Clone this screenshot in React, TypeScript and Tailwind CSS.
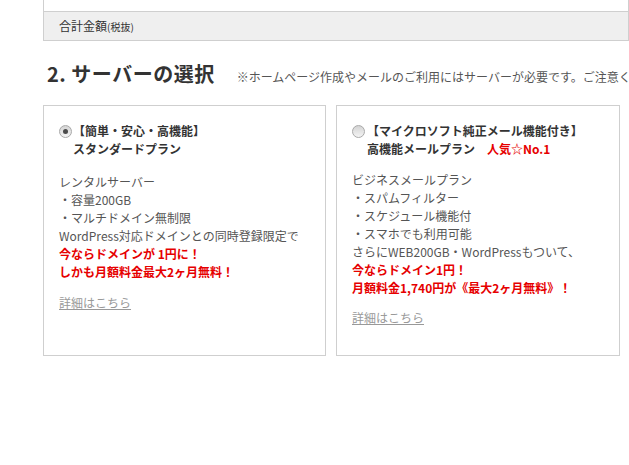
import React from "react";

function Radio({ checked }: { checked?: boolean }) {
  return (
    <span className="mt-[3px] flex h-[13px] w-[13px] shrink-0 items-center justify-center rounded-full border border-[#a9a9a9] bg-gradient-to-b from-[#d4d4d4] to-[#f4f4f4]">
      {checked && <span className="h-[5px] w-[5px] rounded-full bg-[#4a4a4a]" />}
    </span>
  );
}

export default function App() {
  return (
    <div className="h-[465px] w-[629px] overflow-hidden bg-white font-['Noto_Sans_CJK_JP',sans-serif] text-[#555]">
      <div className="ml-[43px] w-[586px] border-x border-b border-[#cfcfcf]">
        <div className="h-[11px]" />
        <div className="flex h-[29px] items-center border-t border-[#cfcfcf] bg-[#efefef] pl-[15px] text-[12px] text-[#333]">
          合計金額<span className="text-[10px]">(税抜)</span>
        </div>
      </div>

      <div className="ml-[47px] mt-[19px] flex items-baseline whitespace-nowrap">
        <h2 className="text-[20px] font-bold leading-[28px] tracking-[0.5px] text-[#333]">2. サーバーの選択</h2>
        <p className="ml-[22px] text-[12px] text-[#555]">
          ※ホームページ作成やメールのご利用にはサーバーが必要です。ご注意ください。
        </p>
      </div>

      <div className="ml-[43px] mt-[17px] flex gap-[10px]">
        <div className="h-[251px] w-[283px] border border-[#cfcfcf] pl-[15px] pt-[16px] text-[12px] leading-[18px]">
          <div className="flex">
            <Radio checked />
            <div className="ml-[1px] font-bold text-[#333]">
              <div>【簡単・安心・高機能】</div>
              <div>スタンダードプラン</div>
            </div>
          </div>
          <div className="mt-[15px]">
            <div>レンタルサーバー</div>
            <div>・容量200GB</div>
            <div>・マルチドメイン無制限</div>
            <div>WordPress対応ドメインとの同時登録限定で</div>
            <div className="font-bold text-[#e60000]">今ならドメインが 1円に！</div>
            <div className="font-bold text-[#e60000]">しかも月額料金最大2ヶ月無料！</div>
          </div>
          <a className="mt-[13px] inline-block text-[#999] underline">詳細はこちら</a>
        </div>

        <div className="h-[251px] w-[284px] border border-[#cfcfcf] pl-[15px] pt-[16px] text-[12px] leading-[18px]">
          <div className="flex">
            <Radio />
            <div className="ml-[2px] font-bold text-[#333]">
              <div>【マイクロソフト純正メール機能付き】</div>
              <div>
                高機能メールプラン　<span className="text-[#e60000]">人気☆No.1</span>
              </div>
            </div>
          </div>
          <div className="mt-[13px]">
            <div>ビジネスメールプラン</div>
            <div>・スパムフィルター</div>
            <div>・スケジュール機能付</div>
            <div>・スマホでも利用可能</div>
            <div>さらにWEB200GB・WordPressもついて、</div>
            <div className="font-bold text-[#e60000]">今ならドメイン1円！</div>
            <div className="font-bold text-[#e60000]">月額料金1,740円が《最大2ヶ月無料》！</div>
          </div>
          <a className="mt-[12px] inline-block text-[#999] underline">詳細はこちら</a>
        </div>
      </div>
    </div>
  );
}
